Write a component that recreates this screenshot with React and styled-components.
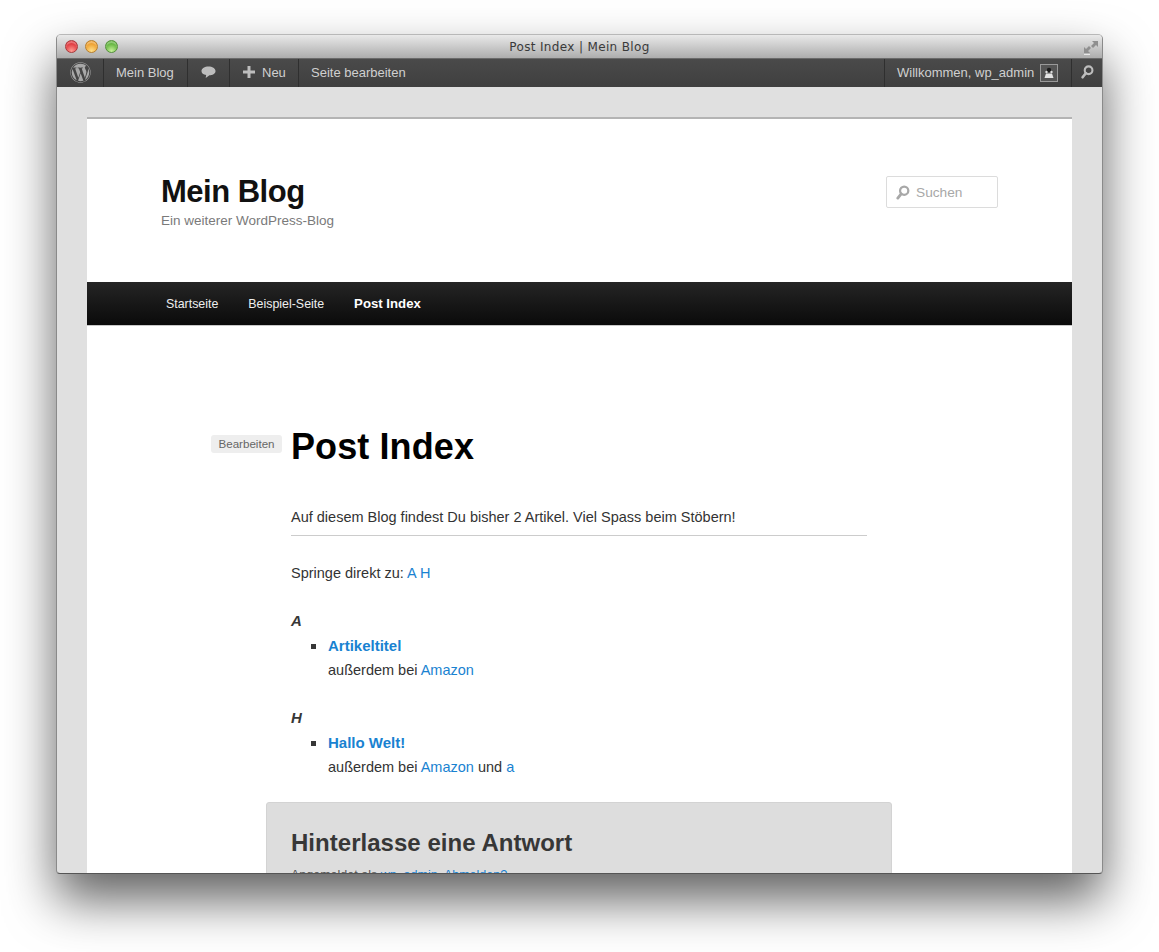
import React from 'react'
import styled, { createGlobalStyle } from 'styled-components'
import { FaWordpress } from 'react-icons/fa'

const Global = createGlobalStyle`
  html, body {
    margin: 0;
    background: #fff;
    overflow: hidden;
  }
  * { box-sizing: border-box; }
`

const Stage = styled.div`
  height: 952px;
  padding: 34px 0 0 56px;
  font-family: "Liberation Sans", Arial, sans-serif;
`

const Win = styled.div`
  width: 1047px;
  height: 840px;
  display: flex;
  flex-direction: column;
  overflow: hidden;
  border-radius: 5px 5px 4px 4px;
  border: 1px solid #8a8a8a;
  border-top-color: #b8b8b8;
  border-bottom-color: #555;
  background: #e0e0e0;
  box-shadow: 0 26px 50px rgba(0, 0, 0, 0.62);
`

const TitleBar = styled.div`
  height: 23px;
  flex: none;
  position: relative;
  display: flex;
  align-items: center;
  justify-content: center;
  background: linear-gradient(#e9e9e9, #adadad);
  font: 12px "DejaVu Sans", sans-serif;
  letter-spacing: 0.35px;
  color: #3a3a3a;
`

const Lights = styled.div`
  position: absolute;
  left: 8px;
  top: 5px;
  display: flex;
  gap: 7px;
`

const Light = styled.span`
  width: 13px;
  height: 13px;
  border-radius: 50%;
  border: 1px solid ${p => p.$edge};
  background: radial-gradient(circle at 50% 90%, ${p => p.$glow} 0%, ${p => p.$color} 65%);
  box-shadow: inset 0 2px 1px rgba(255, 255, 255, 0.3);
`

const Expand = styled.svg`
  position: absolute;
  right: 3px;
  top: 4px;
`

const AdminBar = styled.div`
  height: 29px;
  flex: none;
  display: flex;
  justify-content: space-between;
  background: linear-gradient(#4a4a4a, #3f3f3f);
  border-top: 1px solid #6a6a6a;
  font-size: 13px;
  color: #d0d0d0;
`

const BarGroup = styled.div`
  display: flex;
`

const BarItem = styled.div`
  display: flex;
  align-items: center;
  gap: ${p => p.$gap ?? 6}px;
  width: ${p => p.$w}px;
  padding-left: ${p => p.$pad ?? 0}px;
  padding-bottom: 2px;
  justify-content: ${p => (p.$pad === undefined ? 'center' : 'flex-start')};
  border-right: ${p => (p.$left || p.$end ? 'none' : '1px solid #2f2f2f')};
  border-left: ${p => (p.$left ? '1px solid #2f2f2f' : 'none')};
`

const Avatar = styled.svg`
  flex: none;
  margin-top: 2px;
`

const Canvas = styled.div`
  flex: 1;
  min-height: 0;
  padding: 30px 30px 0;
`

const Sheet = styled.div`
  background: #fff;
  border-top: 2px solid #b4b4b4;
  height: 800px;
`

const Masthead = styled.header`
  height: 163px;
  padding: 55px 74px 0;
  display: flex;
  justify-content: space-between;
  align-items: flex-start;
`

const SiteTitle = styled.h1`
  margin: 0;
  font-size: 31px;
  line-height: 36px;
  font-weight: 700;
  letter-spacing: -0.5px;
  color: #111;
`

const SiteTag = styled.div`
  margin-top: 2px;
  font-size: 13.5px;
  line-height: 18px;
  color: #7a7a7a;
`

const SearchBox = styled.div`
  width: 112px;
  height: 32px;
  margin-top: 2px;
  display: flex;
  align-items: center;
  gap: 6px;
  padding-left: 8px;
  border: 1px solid #dcdcdc;
  border-radius: 2px;
  font-size: 13.7px;
  color: #a8a8a8;
`

const Nav = styled.nav`
  height: 44px;
  padding-left: 79px;
  display: flex;
  align-items: center;
  gap: 30px;
  background: linear-gradient(#252525, #0a0a0a);
  border-bottom: 1px solid #c8c8c8;
  font-size: 12.4px;
  color: #eee;
`

const NavLink = styled.span`
  font-weight: ${p => (p.$active ? 700 : 400)};
  font-size: ${p => (p.$active ? '13.2px' : 'inherit')};
  color: ${p => (p.$active ? '#fff' : '#eee')};
`

const Content = styled.main`
  padding: 96px 0 0 124px;
  color: #373737;
  font-size: 14.5px;
  line-height: 24px;
`

const TitleRow = styled.div`
  display: flex;
  align-items: flex-start;
  gap: 9px;
`

const EditTag = styled.span`
  margin-top: 13px;
  width: 71px;
  height: 18px;
  display: flex;
  align-items: center;
  justify-content: center;
  background: #eee;
  border-radius: 3px;
  font-size: 11.6px;
  color: #666;
`

const PageTitle = styled.h2`
  margin: 0;
  font-size: 36px;
  line-height: 50px;
  font-weight: 700;
  letter-spacing: 0.1px;
  color: #000;
`

const Body = styled.div`
  padding-left: 80px;
`

const Intro = styled.p`
  width: 576px;
  margin: 33px 0 0;
  padding-bottom: 6px;
  border-bottom: 1px solid #ccc;
  color: #333;
`

const Jump = styled.p`
  margin: 25px 0 0;
  color: #333;
`

const Link = styled.a`
  color: #1982d1;
`

const Letter = styled.h3`
  margin: 24px 0 0;
  font-size: 15px;
  line-height: 24px;
  font-style: italic;
  font-weight: 700;
`

const Posts = styled.ul`
  margin: 1px 0 0;
  padding: 0 0 0 37px;
  list-style: none;
`

const Post = styled.li`
  position: relative;
  color: #333;

  &::before {
    content: '';
    position: absolute;
    left: -17px;
    top: 10px;
    width: 5px;
    height: 5px;
    background: #373737;
  }
`

const PostLink = styled(Link)`
  display: block;
  font-size: 15px;
  font-weight: 700;
`

const Respond = styled.section`
  width: 626px;
  height: 200px;
  margin: 23px 0 0 55px;
  padding: 25px 24px;
  background: #ddd;
  border: 1px solid #d3d3d3;
  border-radius: 3px;
`

const RespondTitle = styled.h3`
  margin: 0;
  font-size: 24px;
  line-height: 30px;
  font-weight: 700;
  letter-spacing: 0.03px;
  color: #373737;
`

const Logged = styled.p`
  margin: 7px 0 0;
  font-size: 12.5px;
  line-height: 20px;
  color: #555;
`

const SearchIcon = ({ size, color }) => (
  <svg width={size} height={size} viewBox="0 0 16 16">
    <circle cx="9.8" cy="6" r="4.4" fill="none" stroke={color} strokeWidth="2.4" />
    <path d="M6.6 9.4 L3 14" stroke={color} strokeWidth="3" strokeLinecap="round" />
  </svg>
)

const App = () => (
  <Stage>
    <Global />
    <Win>
      <TitleBar>
        <Lights>
          <Light $color="#e0383e" $glow="#ff9d94" $edge="#a83a3c" />
          <Light $color="#ee9f2e" $glow="#ffe08a" $edge="#b8802e" />
          <Light $color="#62b43e" $glow="#c8f29a" $edge="#55913c" />
        </Lights>
        Post Index | Mein Blog
        <Expand width="16" height="16" viewBox="0 0 16 16">
          <path d="M9 2h6v6l-2-2-3 3-2-2 3-3z" fill="#8f8f8f" />
          <path d="M7 14H1V8l2 2 3-3 2 2-3 3z" fill="#8f8f8f" />
          <path d="M1 15.5h6" stroke="#e8e8e8" strokeWidth="1" />
        </Expand>
      </TitleBar>
      <AdminBar>
        <BarGroup>
          <BarItem $w={47}><FaWordpress size={21} color="#a8a8a8" /></BarItem>
          <BarItem $w={84} $pad={12}>Mein Blog</BarItem>
          <BarItem $w={42}>
            <svg width="15" height="14" viewBox="0 0 16 14">
              <path d="M8 1c4 0 7.5 1.900 7.500 5S12 10.500 9 10.500L5 13.500l.5-3.300C2.500 9.800.5 8.500.5 6 .5 2.900 4 1 8 1z" fill="#bdbdbd" />
            </svg>
          </BarItem>
          <BarItem $w={69} $pad={13} $gap={7}>
            <svg width="12" height="12" viewBox="0 0 12 12">
              <path d="M4.500 0h3v4.500H12v3H7.500V12h-3V7.500H0v-3h4.500z" fill="#bdbdbd" />
            </svg>
            Neu
          </BarItem>
          <BarItem $end $pad={12} $w={150}>Seite bearbeiten</BarItem>
        </BarGroup>
        <BarGroup>
          <BarItem $left $w={187} $pad={12}>
            Willkommen, wp_admin
            <Avatar width="18" height="18" viewBox="0 0 18 18">
              <rect x="0.500" y="0.500" width="17" height="17" fill="#555" stroke="#999" />
              <circle cx="9" cy="6" r="2.200" fill="#1c1c1c" />
              <path d="M6 9.500h6l1.500 4.500h-9z" fill="#e4e4e4" />
              <circle cx="6.500" cy="8" r="1.200" fill="#ddd" />
              <circle cx="11.500" cy="8" r="1.200" fill="#ddd" />
            </Avatar>
          </BarItem>
          <BarItem $left $end $w={31}><SearchIcon size={14} color="#bdbdbd" /></BarItem>
        </BarGroup>
      </AdminBar>
      <Canvas>
        <Sheet>
          <Masthead>
            <div>
              <SiteTitle>Mein Blog</SiteTitle>
              <SiteTag>Ein weiterer WordPress-Blog</SiteTag>
            </div>
            <SearchBox>
              <SearchIcon size={15} color="#a8a8a8" />
              Suchen
            </SearchBox>
          </Masthead>
          <Nav>
            <NavLink>Startseite</NavLink>
            <NavLink>Beispiel-Seite</NavLink>
            <NavLink $active>Post Index</NavLink>
          </Nav>
          <Content>
            <TitleRow>
              <EditTag>Bearbeiten</EditTag>
              <PageTitle>Post Index</PageTitle>
            </TitleRow>
            <Body>
              <Intro>Auf diesem Blog findest Du bisher 2 Artikel. Viel Spass beim Stöbern!</Intro>
              <Jump>Springe direkt zu: <Link>A</Link> <Link>H</Link></Jump>
              <Letter>A</Letter>
              <Posts>
                <Post>
                  <PostLink>Artikeltitel</PostLink>
                  außerdem bei <Link>Amazon</Link>
                </Post>
              </Posts>
              <Letter>H</Letter>
              <Posts>
                <Post>
                  <PostLink>Hallo Welt!</PostLink>
                  außerdem bei <Link>Amazon</Link> und <Link>a</Link>
                </Post>
              </Posts>
            </Body>
            <Respond>
              <RespondTitle>Hinterlasse eine Antwort</RespondTitle>
              <Logged>Angemeldet als <Link>wp_admin</Link>. <Link>Abmelden?</Link></Logged>
            </Respond>
          </Content>
        </Sheet>
      </Canvas>
    </Win>
  </Stage>
)

export default App
